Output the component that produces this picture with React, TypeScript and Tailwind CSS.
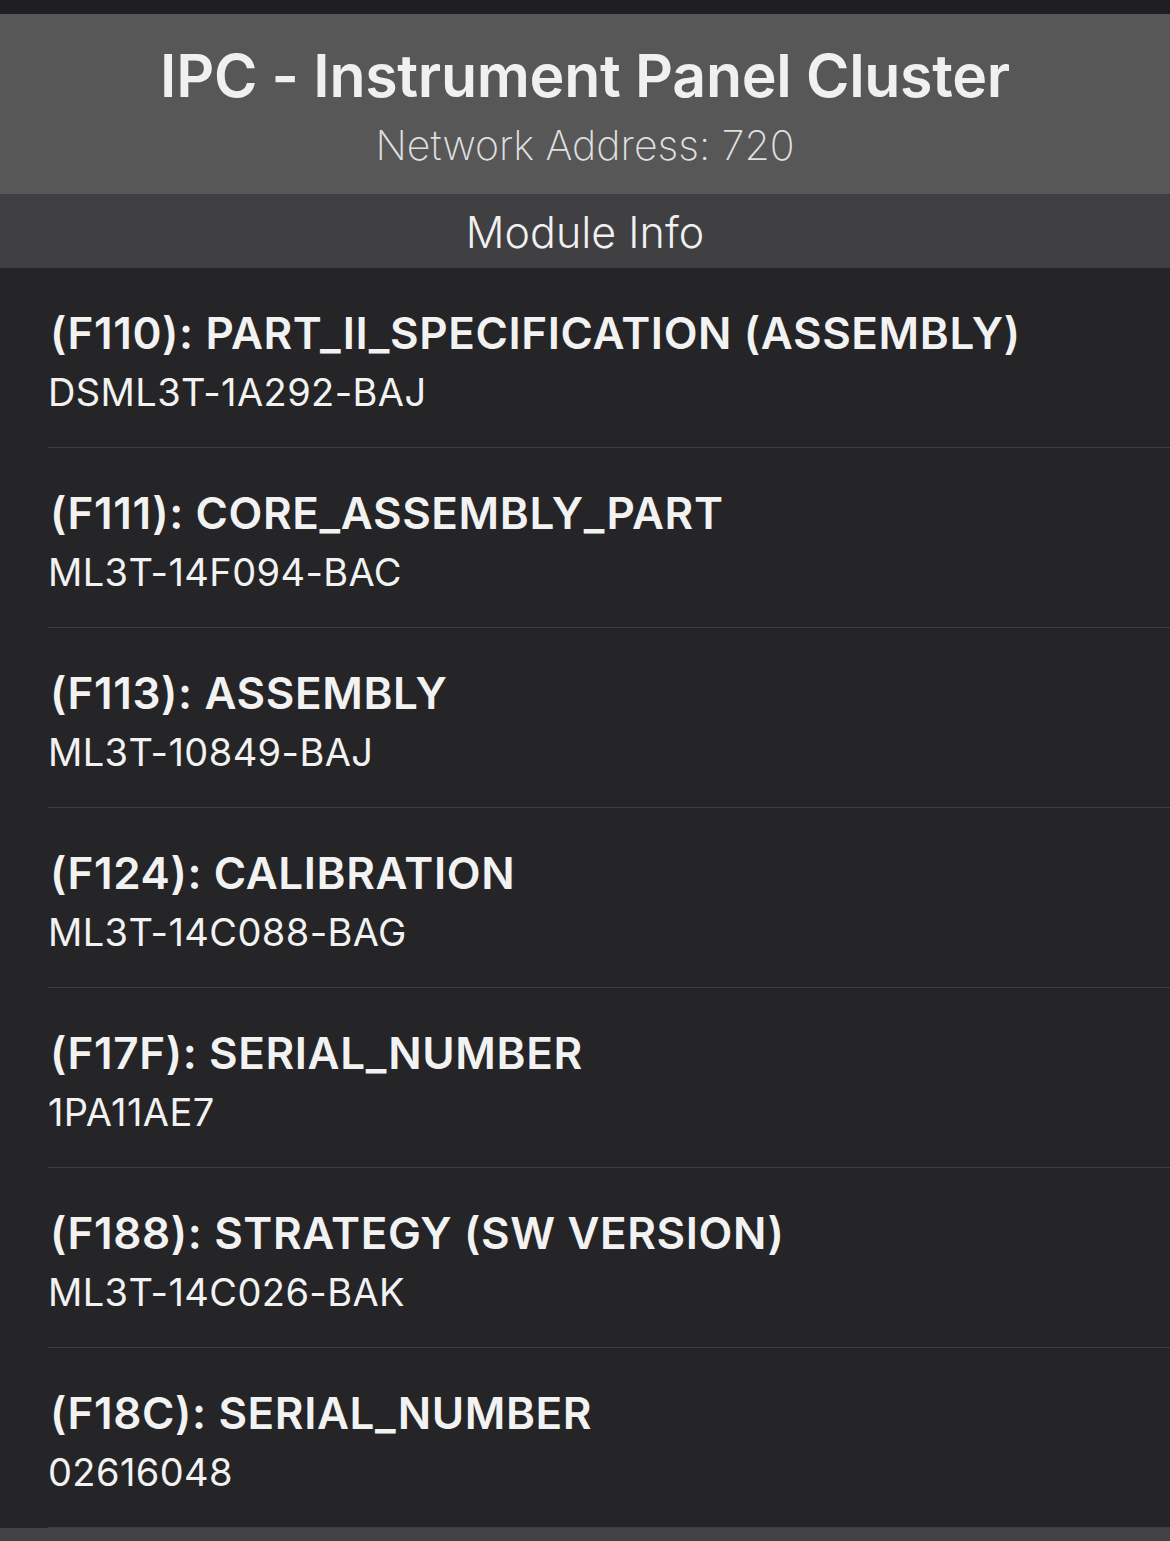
const rows = [
  { code: 'F110', name: 'PART_II_SPECIFICATION (ASSEMBLY)', value: 'DSML3T-1A292-BAJ' },
  { code: 'F111', name: 'CORE_ASSEMBLY_PART', value: 'ML3T-14F094-BAC' },
  { code: 'F113', name: 'ASSEMBLY', value: 'ML3T-10849-BAJ' },
  { code: 'F124', name: 'CALIBRATION', value: 'ML3T-14C088-BAG' },
  { code: 'F17F', name: 'SERIAL_NUMBER', value: '1PA11AE7' },
  { code: 'F188', name: 'STRATEGY (SW VERSION)', value: 'ML3T-14C026-BAK' },
  { code: 'F18C', name: 'SERIAL_NUMBER', value: '02616048' },
]

export default function App() {
  return (
    <div className="min-h-screen bg-[#252527] text-[#f2f2f2] font-['Inter',sans-serif]">
      <div className="h-[14px] bg-[#1f1f21]" />
      <header className="h-[180px] bg-[#575757] flex flex-col items-center pt-[30px]">
        <h1 className="text-[59px] leading-[64px] font-semibold tracking-[-0.3px] text-[#f0f0f0]">
          IPC - Instrument Panel Cluster
        </h1>
        <p className="text-[41px] leading-[48px] font-extralight text-[#e0e0e0] mt-[13px]">
          Network Address: 720
        </p>
      </header>
      <div className="h-[74px] bg-[#403f41] flex items-center justify-center pt-[2px]">
        <span className="text-[43px] font-light text-[#f0f0f0]">Module Info</span>
      </div>
      <ul>
        {rows.map((r) => (
          <li key={r.code} className="pl-[48px]">
            <div className="h-[180px] border-b border-[#3e3e40] pt-[35px]">
              <div className="text-[44px] leading-[60px] font-semibold tracking-[0.6px] pl-[2px]">
                ({r.code}): {r.name}
              </div>
              <div className="text-[38px] leading-[58px] font-normal tracking-[0.4px]">{r.value}</div>
            </div>
          </li>
        ))}
      </ul>
      <div className="h-[13px] bg-[#424244]" />
    </div>
  )
}
